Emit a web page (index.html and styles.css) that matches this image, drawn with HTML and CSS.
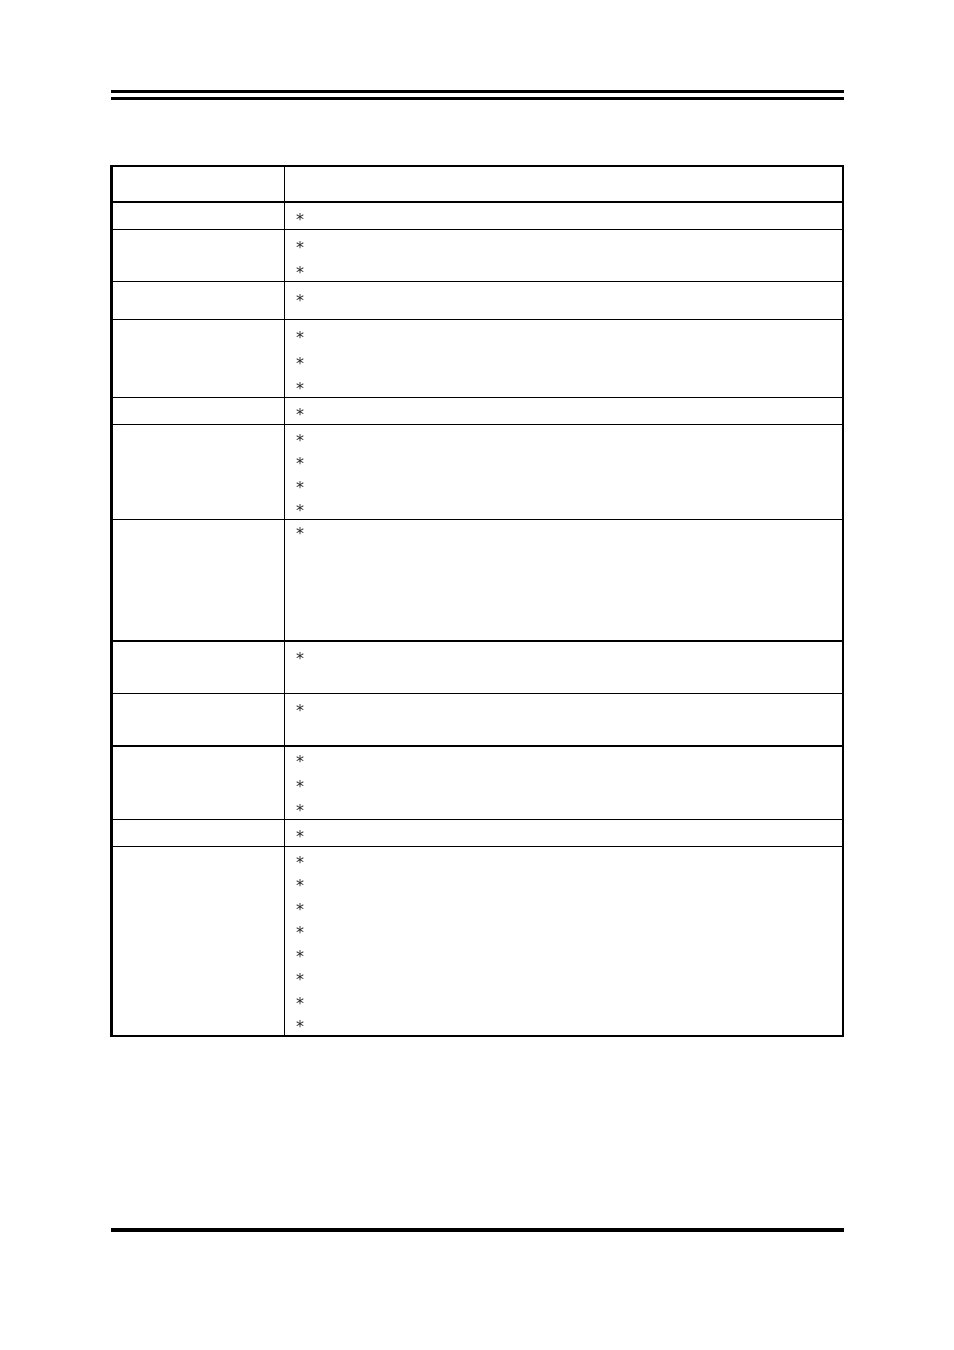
FILE: index.html
```html
<!DOCTYPE html>
<html>
<head>
<meta charset="utf-8">
<link rel="stylesheet" href="styles.css">
</head>
<body>
<div class="page">
  <div class="rules-top">
    <div class="rule"></div>
    <div class="rule"></div>
  </div>
  <div class="spec-table">
    <div class="row head h-34"><div class="cell-l"></div><div class="cell-r"></div></div>
    <div class="row h-26"><div class="cell-l"></div><div class="cell-r p4 s24"><div class="ln">*</div></div></div>
    <div class="row h-51"><div class="cell-l"></div><div class="cell-r p4 s25"><div class="ln">*</div><div class="ln">*</div></div></div>
    <div class="row h-37"><div class="cell-l"></div><div class="cell-r p6 s24"><div class="ln">*</div></div></div>
    <div class="row h-77"><div class="cell-l"></div><div class="cell-r p4 s255"><div class="ln">*</div><div class="ln">*</div><div class="ln">*</div></div></div>
    <div class="row h-26"><div class="cell-l"></div><div class="cell-r p4 s24"><div class="ln">*</div></div></div>
    <div class="row h-94"><div class="cell-l"></div><div class="cell-r p25 s235"><div class="ln">*</div><div class="ln">*</div><div class="ln">*</div><div class="ln">*</div></div></div>
    <div class="row h-120 thick"><div class="cell-l"></div><div class="cell-r p1 s24"><div class="ln">*</div></div></div>
    <div class="row h-51"><div class="cell-l"></div><div class="cell-r p4 s24"><div class="ln">*</div></div></div>
    <div class="row h-51 thick"><div class="cell-l"></div><div class="cell-r p4 s24"><div class="ln">*</div></div></div>
    <div class="row h-72"><div class="cell-l"></div><div class="cell-r p2 s245"><div class="ln">*</div><div class="ln">*</div><div class="ln">*</div></div></div>
    <div class="row h-26"><div class="cell-l"></div><div class="cell-r p4 s24"><div class="ln">*</div></div></div>
    <div class="row h-188 last"><div class="cell-l"></div><div class="cell-r p25 s2357"><div class="ln">*</div><div class="ln">*</div><div class="ln">*</div><div class="ln">*</div><div class="ln">*</div><div class="ln">*</div><div class="ln">*</div><div class="ln">*</div></div></div>
  </div>
  <div class="rule-bottom"></div>
</div>
</body>
</html>
```
FILE: styles.css
```css
html, body {
  margin: 0;
  padding: 0;
  background: #fff;
}
body {
  font-family: "DejaVu Sans", "Liberation Sans", sans-serif;
  color: #000;
}
.page {
  width: 954px;
  height: 1350px;
  padding-top: 90px;
  box-sizing: border-box;
}
.rules-top {
  margin-left: 111px;
  width: 733px;
  display: flex;
  flex-direction: column;
  gap: 4px;
}
.rule {
  height: 3px;
  background: #000;
}
.spec-table {
  margin-top: 65px;
  margin-left: 110px;
  width: 734px;
  box-sizing: border-box;
  border-top: 2px solid #000;
  border-bottom: 2px solid #000;
  border-left: 3px solid #000;
  border-right: 2px solid #000;
}
.row {
  display: flex;
  border-bottom: 1px solid #000;
}
.row.head, .row.thick {
  border-bottom: 2px solid #000;
}
.row.last {
  border-bottom: none;
}
.cell-l {
  width: 171px;
  border-right: 1px solid #000;
  flex: none;
}
.cell-r {
  flex: 1;
  padding-left: 11px;
  box-sizing: border-box;
  font-size: 16px;
  color: #2a2a2a;
  transform: translateZ(0);
}
.h-26 { height: 26px; }
.h-34 { height: 34px; }
.h-37 { height: 37px; }
.h-51 { height: 51px; }
.h-72 { height: 72px; }
.h-77 { height: 77px; }
.h-94 { height: 94px; }
.h-120 { height: 120px; }
.h-188 { height: 188px; }
.p1 { padding-top: 2px; }
.p2 { padding-top: 3px; }
.p25 { padding-top: 3.5px; }
.p4 { padding-top: 5px; }
.p6 { padding-top: 7px; }
.ln { height: 24px; line-height: 24px; }
.s235 .ln { height: 23.5px; line-height: 23.5px; }
.s2357 .ln { height: 23.57px; line-height: 23.57px; }
.s245 .ln { height: 24.5px; line-height: 24.5px; }
.s25 .ln { height: 25px; line-height: 25px; }
.s255 .ln { height: 25.5px; line-height: 25.5px; }
.rule-bottom {
  margin-top: 191px;
  margin-left: 111px;
  width: 733px;
  height: 4px;
  background: #000;
}
```
